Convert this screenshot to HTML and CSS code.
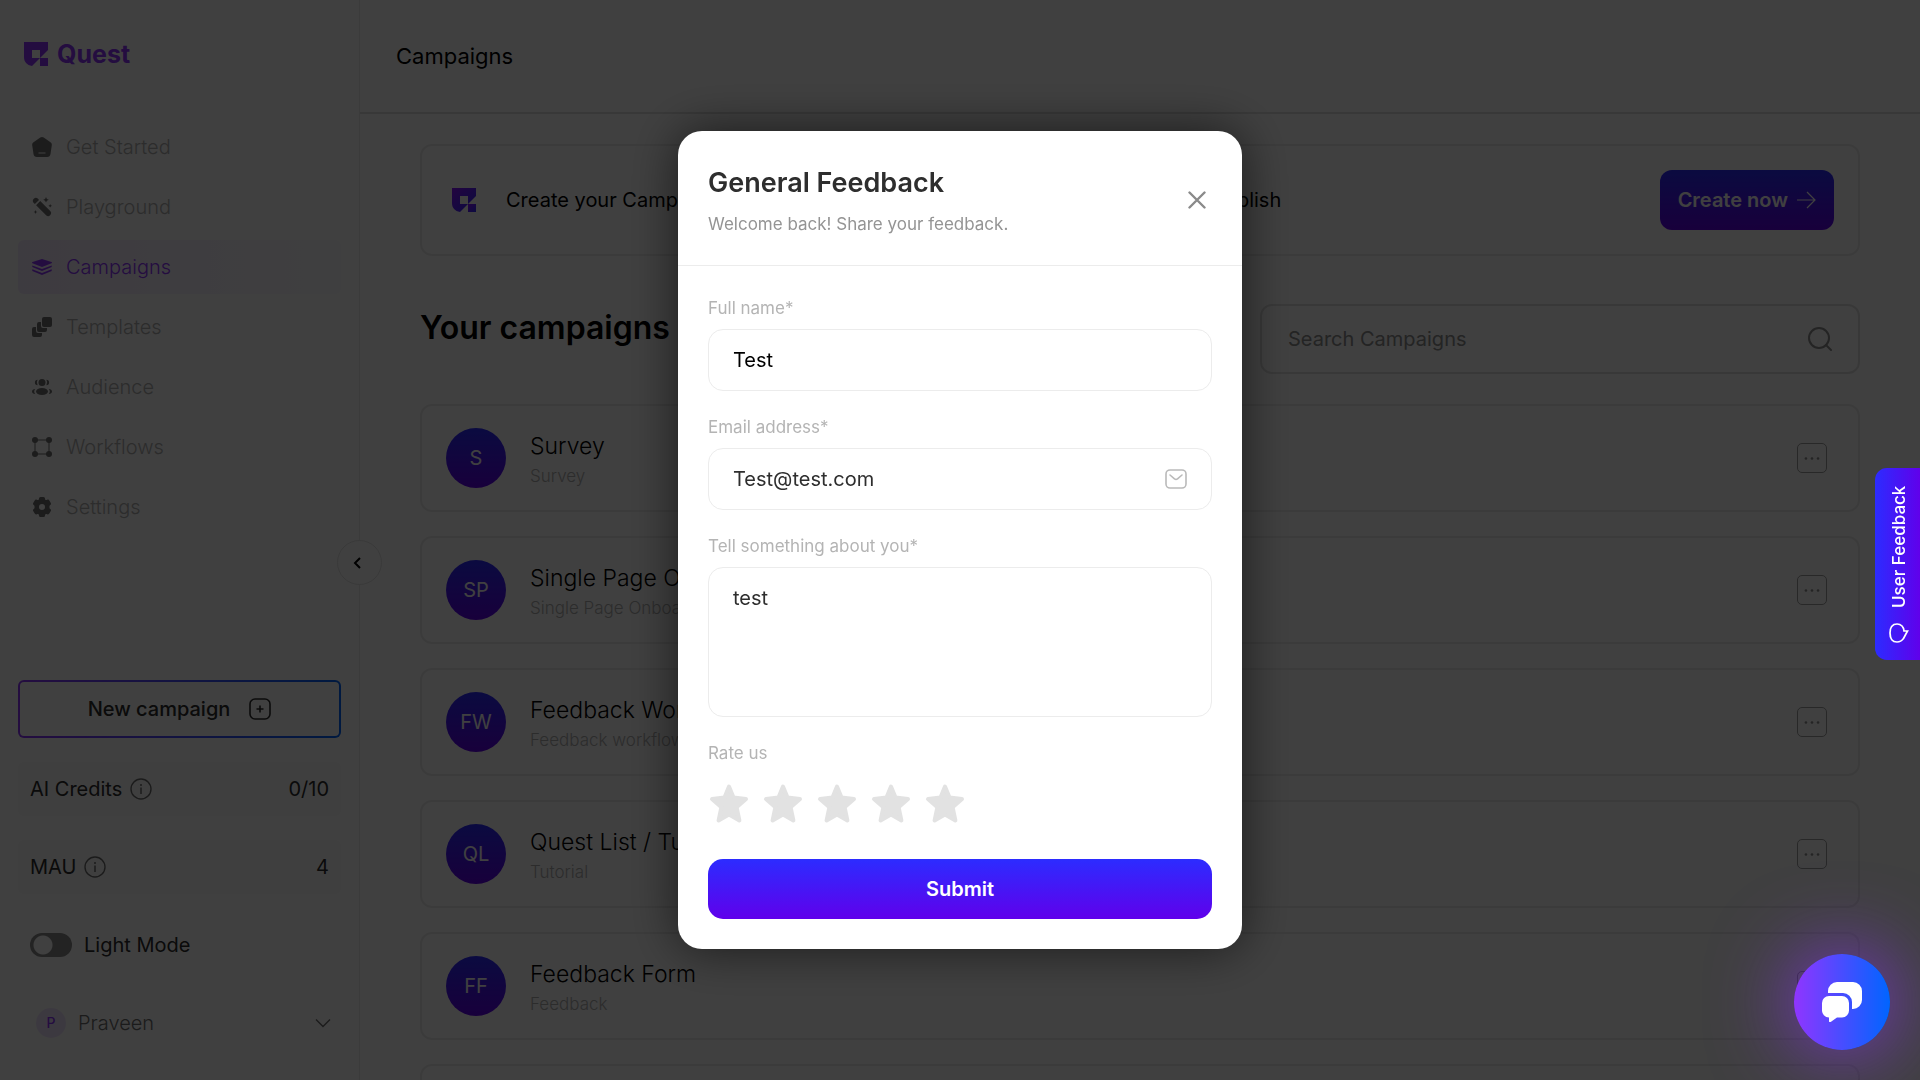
FILE: index.html
```html
<!DOCTYPE html>
<html lang="en">
<head>
<meta charset="utf-8">
<meta name="viewport" content="width=device-width, initial-scale=1">
<title>Quest – Campaigns</title>
<link rel="stylesheet" href="styles.css">
</head>
<body>
<svg class="defs" aria-hidden="true">
  <defs>
    <linearGradient id="brand" x1="0" y1="0" x2="1" y2="1">
      <stop offset="0" stop-color="#8b12ff"/>
      <stop offset="1" stop-color="#2c2cff"/>
    </linearGradient>
    <symbol id="logo-mark" viewBox="0 0 24 24">
      <path fill-rule="evenodd" d="M0 0H24V8L16 16L8 24C3 23 0 20 0 15ZM8 8V16H16V8Z"/>
      <path d="M16 16H24V24H16Z"/>
    </symbol>
    <symbol id="info" viewBox="0 0 22 22">
      <circle cx="11" cy="11" r="10" fill="none" stroke="currentColor" stroke-width="1.4"/>
      <path d="M11 9.5V16" stroke="currentColor" stroke-width="1.5"/>
      <circle cx="11" cy="7" r="1" fill="currentColor"/>
    </symbol>
    <symbol id="dots" viewBox="0 0 30 30">
      <circle cx="8.500" cy="15.500" r="1.400"/><circle cx="15" cy="15.500" r="1.400"/><circle cx="21.500" cy="15.500" r="1.400"/>
    </symbol>
    <symbol id="star" viewBox="0 0 42 42">
      <path d="M21 4.500L25.500 15.600L38 17L28.600 25.200L31.400 38.500L21 32.600L10.600 38.500L13.400 25.200L4 17L16.500 15.600Z" stroke="currentColor" stroke-width="4" stroke-linejoin="round"/>
    </symbol>
  </defs>
</svg>

<div class="app">
  <aside class="sidebar">
    <a class="logo" href="#">
      <svg class="logo-mark" aria-hidden="true"><use href="#logo-mark"/></svg>
      <span>Quest</span>
    </a>
    <nav class="nav">
      <a class="nav-item" href="#">
        <svg viewBox="0 0 20 20" aria-hidden="true"><path fill-rule="evenodd" d="M8.300.600a3 3 0 0 1 3.400 0l6.800 4.700A3 3 0 0 1 19.800 8.300L18.500 17a3.500 3.500 0 0 1-3.500 3H5a3.500 3.500 0 0 1-3.500-3L.200 8.300A3 3 0 0 1 1.500 5.300ZM6.500 15.500v1h7v-1Z"/></svg>
        <span>Get Started</span>
      </a>
      <a class="nav-item" href="#">
        <svg viewBox="0 0 20 20" aria-hidden="true"><path d="M1.800 1.800a3 3 0 0 1 4.200 0L7 2.900 2.900 7 1.800 6a3 3 0 0 1 0-4.200ZM8.200 4.100l10 10a2.900 2.900 0 0 1-4.100 4.100l-10-10ZM14 0l.9 1.900 1.900.9-1.900.9L14 5.600l-.9-1.900-1.900-.9 1.900-.9ZM18.200 7l.6 1.200 1.200.6-1.200.6-.6 1.200-.6-1.200-1.200-.6 1.200-.6ZM3.500 13l.6 1.400 1.400.6-1.400.6-.6 1.400-.6-1.400-1.400-.6 1.400-.6Z"/></svg>
        <span>Playground</span>
      </a>
      <a class="nav-item nav-item-active" href="#" aria-current="page">
        <svg viewBox="0 0 20 20" aria-hidden="true"><path d="M10 2l9.500 3c.7.300.7 1 0 1.300L10 10 .5 6.300c-.7-.3-.7-1 0-1.300Z"/><path d="M.300 8.400L10 12l9.700-3.600v1.700L10 14 .300 10.100ZM.300 12.200L10 15.900l9.700-3.700v1.700L10 18 .300 13.900Z"/></svg>
        <span>Campaigns</span>
      </a>
      <a class="nav-item" href="#">
        <svg viewBox="0 0 20 20" aria-hidden="true"><rect x="10" y="0" width="10" height="10" rx="2"/><path d="M9 5v4a2 2 0 0 0 2 2h4v2a2 2 0 0 1-2 2H7a2 2 0 0 1-2-2V7a2 2 0 0 1 2-2Z"/><path d="M4 10v4a2 2 0 0 0 2 2h4v2a2 2 0 0 1-2 2H2a2 2 0 0 1-2-2v-6a2 2 0 0 1 2-2Z"/></svg>
        <span>Templates</span>
      </a>
      <a class="nav-item" href="#">
        <svg viewBox="0 0 20 20" aria-hidden="true"><circle cx="10" cy="5.500" r="3.500"/><ellipse cx="10" cy="14.500" rx="6" ry="3.500"/><path d="M5.600 2.800a5 5 0 0 0 0 5.400 2.700 2.700 0 0 1 0-5.400ZM14.400 2.800a5 5 0 0 1 0 5.400 2.700 2.700 0 0 0 0-5.400ZM3.200 12a4 4 0 0 0 0 5C1.300 16.800 0 15.800 0 14.500S1.300 12.200 3.200 12ZM16.800 12a4 4 0 0 1 0 5c1.900-.2 3.200-1.200 3.200-2.500s-1.300-2.300-3.200-2.500Z"/></svg>
        <span>Audience</span>
      </a>
      <a class="nav-item" href="#">
        <svg viewBox="0 0 20 20" aria-hidden="true"><circle cx="3" cy="3" r="3"/><circle cx="17" cy="3" r="3"/><circle cx="3" cy="17" r="3"/><circle cx="17" cy="17" r="3"/><path d="M3 3H17V17H3Z" fill="none" stroke="currentColor" stroke-width="1"/></svg>
        <span>Workflows</span>
      </a>
      <a class="nav-item" href="#">
        <svg viewBox="0 0 20 20" aria-hidden="true"><path fill-rule="evenodd" d="M8.500 0h3a1.500 1.500 0 0 1 1.500 1.500c0 1.400 1 2 2.200 1.300.8-.4 1.700-.2 2.100.6l1.500 2.500c.4.800.2 1.600-.5 2.100-1.200.7-1.200 3.300 0 4 .7.500.9 1.300.5 2.100l-1.500 2.500c-.4.800-1.300 1-2.100.6-1.200-.7-2.200-.1-2.200 1.300a1.500 1.500 0 0 1-1.500 1.500h-3A1.500 1.500 0 0 1 7 18.500c0-1.400-1-2-2.200-1.300-.8.400-1.700.2-2.100-.6L1.200 14.100c-.4-.8-.2-1.600.5-2.100 1.200-.7 1.200-3.300 0-4-.7-.5-.9-1.300-.5-2.100l1.500-2.500c.4-.8 1.300-1 2.100-.6C6 3.500 7 2.900 7 1.500A1.500 1.500 0 0 1 8.500 0ZM10 7a3 3 0 1 0 0 6 3 3 0 0 0 0-6Z"/></svg>
        <span>Settings</span>
      </a>
    </nav>

    <div class="sidebar-foot">
      <button class="new-campaign" type="button">
        <span>New campaign</span>
        <svg viewBox="0 0 22 22" aria-hidden="true"><rect x="1" y="1" width="20" height="20" rx="5"/><path d="M11 7.500V14.500M7.500 11H14.500"/></svg>
      </button>
      <div class="stat"><span>AI Credits</span><svg aria-hidden="true"><use href="#info"/></svg><strong>0/10</strong></div>
      <div class="stat"><span>MAU</span><svg aria-hidden="true"><use href="#info"/></svg><strong>4</strong></div>
      <label class="mode"><input type="checkbox" role="switch"><span>Light Mode</span></label>
      <button class="user" type="button">
        <span class="user-avatar">P</span>
        <span class="user-name">Praveen</span>
        <svg viewBox="0 0 16 10" aria-hidden="true"><path d="M1 1.500L8 8.500L15 1.500"/></svg>
      </button>
    </div>
    <button class="collapse" type="button" aria-label="Collapse sidebar">
      <svg viewBox="0 0 8 12" aria-hidden="true"><path d="M7 1L2 6L7 11"/></svg>
    </button>
  </aside>

  <main class="main">
    <header class="topbar"><h1>Campaigns</h1></header>
    <div class="content">
      <section class="banner">
        <svg class="logo-mark" fill="url(#brand)" aria-hidden="true"><use href="#logo-mark"/></svg>
        <p>Create your Campaign in just a few minutes, pick from easy templates and publish</p>
        <button class="create" type="button"><span>Create now</span>
          <svg viewBox="0 0 20 18" aria-hidden="true"><path d="M1 9H19M11 1L19 9L11 17"/></svg>
        </button>
      </section>

      <div class="list-head">
        <h2>Your campaigns</h2>
        <label class="search">
          <input type="search" placeholder="Search Campaigns" aria-label="Search campaigns">
          <svg viewBox="0 0 24 24" aria-hidden="true"><circle cx="11" cy="11" r="10"/><path d="M18 18L23 23"/></svg>
        </label>
      </div>

      <ul class="rows">
        <li class="row"><span class="avatar">S</span><div class="row-text"><h3>Survey</h3><p>Survey</p></div><button class="more" type="button" aria-label="More actions"><svg aria-hidden="true"><use href="#dots"/></svg></button></li>
        <li class="row"><span class="avatar">SP</span><div class="row-text"><h3>Single Page Onboarding</h3><p>Single Page Onboarding</p></div><button class="more" type="button" aria-label="More actions"><svg aria-hidden="true"><use href="#dots"/></svg></button></li>
        <li class="row"><span class="avatar">FW</span><div class="row-text"><h3>Feedback Workflow</h3><p>Feedback workflow</p></div><button class="more" type="button" aria-label="More actions"><svg aria-hidden="true"><use href="#dots"/></svg></button></li>
        <li class="row"><span class="avatar">QL</span><div class="row-text"><h3>Quest List / Tutorial</h3><p>Tutorial</p></div><button class="more" type="button" aria-label="More actions"><svg aria-hidden="true"><use href="#dots"/></svg></button></li>
        <li class="row"><span class="avatar">FF</span><div class="row-text"><h3>Feedback Form</h3><p>Feedback</p></div><button class="more" type="button" aria-label="More actions"><svg aria-hidden="true"><use href="#dots"/></svg></button></li>
        <li class="row"></li>
      </ul>
    </div>
  </main>
</div>

<div class="overlay">
  <form class="modal" role="dialog" aria-labelledby="modal-title">
    <header class="modal-head">
      <div>
        <h2 id="modal-title">General Feedback</h2>
        <p>Welcome back! Share your feedback.</p>
      </div>
      <button class="close" type="button" aria-label="Close">
        <svg viewBox="0 0 18 18" aria-hidden="true"><path d="M1.500 1.500L16.500 16.500M16.500 1.500L1.500 16.500"/></svg>
      </button>
    </header>
    <div class="modal-body">
      <div class="field">
        <label for="name">Full name*</label>
        <input class="control control-name" id="name" type="text" value="Test">
      </div>
      <div class="field">
        <label for="email">Email address*</label>
        <div class="control control-icon">
          <input id="email" type="email" value="Test@test.com">
          <svg viewBox="0 0 22 20" aria-hidden="true"><rect x="1" y="1" width="20" height="18" rx="4"/><path d="M5 6L9.500 9.800Q11 11 12.500 9.800L17 6"/></svg>
        </div>
      </div>
      <div class="field">
        <label for="about">Tell something about you*</label>
        <textarea class="control control-area" id="about">test</textarea>
      </div>
      <div class="field">
        <span class="field-label" id="rate-label">Rate us</span>
        <div class="stars" role="group" aria-labelledby="rate-label">
          <button type="button" aria-label="1 star"><svg aria-hidden="true"><use href="#star"/></svg></button>
          <button type="button" aria-label="2 stars"><svg aria-hidden="true"><use href="#star"/></svg></button>
          <button type="button" aria-label="3 stars"><svg aria-hidden="true"><use href="#star"/></svg></button>
          <button type="button" aria-label="4 stars"><svg aria-hidden="true"><use href="#star"/></svg></button>
          <button type="button" aria-label="5 stars"><svg aria-hidden="true"><use href="#star"/></svg></button>
        </div>
      </div>
      <button class="submit" type="submit">Submit</button>
    </div>
  </form>
</div>

<button class="feedback-tab" type="button">
  <svg viewBox="0 0 20 20" aria-hidden="true"><path d="M5 12H1.500L5.500 4.500Q8 1 12 1C16.500 1 19 4.500 19 10C19 15.500 16.500 19 12 19C8 19 5 16 5 12Z"/></svg>
  <span>User Feedback</span>
</button>

<button class="chat" type="button" aria-label="Open chat">
  <svg viewBox="0 0 40 40" aria-hidden="true"><path d="M6 11V9a9 9 0 0 1 9-9H31a9 9 0 0 1 9 9V18a9 9 0 0 1-9 9H30V20a9 9 0 0 0-9-9Z"/><path d="M7 14H20a7 7 0 0 1 7 7V28a7 7 0 0 1-7 7.500H15L9 39.800Q7 41 7 39V35.500A7 7 0 0 1 0 28V21A7 7 0 0 1 7 14Z"/></svg>
</button>
</body>
</html>
```

FILE: styles.css
```css
:root {
  --line: #ececec;
  --muted: #b0b0b0;
  --purple: #9035ff;
  --fill: linear-gradient(180deg, #2c2cff 0%, #6000eb 100%);
}

* { box-sizing: border-box; margin: 0; padding: 0; }

body {
  height: 100vh;
  overflow: hidden;
  background: #fff;
  color: #000;
  font-family: Inter, "Open Sans", sans-serif;
  font-size: 20px;
  line-height: 28px;
}

a { color: inherit; text-decoration: none; }
button, input, textarea { font: inherit; color: inherit; border: 0; background: none; outline: 0; }
button { cursor: pointer; }
svg { display: block; flex: none; }
ul { list-style: none; }
.defs { position: absolute; width: 0; height: 0; }

.app { display: flex; height: 100vh; overflow: hidden; }

/* Sidebar */
.sidebar {
  position: relative;
  display: flex;
  flex: none;
  flex-direction: column;
  width: 360px;
  padding: 36px 18px 30px;
  border-right: 1px solid var(--line);
}
.logo {
  display: flex;
  align-items: center;
  gap: 9px;
  padding-left: 6px;
  color: var(--purple);
  font-size: 25px;
  font-weight: 700;
  line-height: 36px;
}
.logo-mark { width: 24px; height: 24px; }
.logo .logo-mark { fill: currentColor; }

.nav { display: flex; flex-direction: column; gap: 6px; margin-top: 48px; }
.nav-item {
  display: flex;
  align-items: center;
  gap: 14px;
  height: 54px;
  padding: 0 14px;
  border-radius: 6px;
  color: var(--muted);
  font-weight: 300;
}
.nav-item svg { width: 20px; height: 20px; color: #707070; fill: currentColor; }
.nav-item-active { background: linear-gradient(90deg, #f4eaff, #fbfbff); color: var(--purple); }
.nav-item-active svg { color: var(--purple); }

.sidebar-foot { display: flex; flex-direction: column; gap: 24px; margin-top: auto; color: #2c2c2c; }
.new-campaign {
  display: flex;
  align-items: center;
  justify-content: center;
  gap: 19px;
  height: 58px;
  border: 2px solid transparent;
  border-radius: 6px;
  background: linear-gradient(#fff, #fff) padding-box, linear-gradient(90deg, #9035ff, #0065ff) border-box;
  font-weight: 500;
}
.new-campaign svg { width: 22px; height: 22px; fill: none; stroke: currentColor; stroke-width: 1.6; }
.stat { display: flex; align-items: center; gap: 8px; height: 54px; padding: 0 12px; border-radius: 6px; background: #fbfbfb; }
.stat svg { width: 22px; height: 22px; color: #6e6e6e; }
.stat strong { margin-left: auto; font-weight: 400; }
.mode { display: flex; align-items: center; gap: 12px; height: 54px; padding: 0 12px; }
.mode input {
  appearance: none;
  width: 42px;
  height: 24px;
  border-radius: 12px;
  background: radial-gradient(circle at 13px 12px, #fff 9px, transparent 10px), #8a8a8a;
}
.user { display: flex; align-items: center; gap: 12px; height: 54px; padding: 0 10px 0 18px; color: #6e6e6e; font-weight: 300; }
.user-avatar {
  width: 30px;
  border-radius: 50%;
  background: #f0e4ff;
  color: var(--purple);
  font-size: 14px;
  font-weight: 500;
  line-height: 30px;
}
.user svg { width: 16px; height: 10px; margin-left: auto; fill: none; stroke: currentColor; stroke-width: 1.4; }
.collapse {
  position: absolute;
  top: 50%;
  right: -23px;
  display: grid;
  place-items: center;
  width: 45px;
  height: 45px;
  padding-right: 5px;
  border: 1px solid #e4e4e4;
  border-radius: 50%;
  background: #fff;
}
.collapse svg { width: 8px; height: 12px; fill: none; stroke: currentColor; stroke-width: 2; }

/* Main column */
.main { flex: 1; min-width: 0; }
.topbar { padding: 38px 36px; border-bottom: 2px solid #e0e0e0; }
.topbar h1 { font-size: 22px; font-weight: 400; line-height: 36px; }
.content { padding: 30px 60px; }
.banner {
  display: flex;
  align-items: center;
  height: 112px;
  padding: 0 24px 0 30px;
  border: 2px solid var(--line);
  border-radius: 12px;
}
.banner p { margin-left: 30px; }
.create {
  display: flex;
  align-items: center;
  gap: 8px;
  height: 60px;
  margin-left: auto;
  padding: 0 18px;
  border-radius: 12px;
  background: var(--fill);
  color: #fff;
  font-weight: 600;
}
.create svg { width: 20px; height: 18px; fill: none; stroke: currentColor; stroke-width: 1.2; }

.list-head { display: flex; justify-content: space-between; margin: 48px 0 30px; }
.list-head h2 { font-size: 32px; font-weight: 600; line-height: 48px; }
.search {
  display: flex;
  align-items: center;
  width: 600px;
  height: 70px;
  padding: 0 26px;
  border: 2px solid #e0e0e0;
  border-radius: 12px;
}
.search input { flex: 1; min-width: 0; }
.search input::placeholder { color: #8e8e8e; opacity: 1; }
.search svg { width: 24px; height: 24px; fill: none; stroke: #8e8e8e; stroke-width: 2; stroke-linecap: round; }

.rows { display: flex; flex-direction: column; gap: 24px; }
.row {
  display: flex;
  align-items: center;
  gap: 24px;
  height: 108px;
  padding: 0 31px 0 24px;
  border: 2px solid var(--line);
  border-radius: 12px;
}
.avatar {
  width: 60px;
  border-radius: 50%;
  background: var(--fill);
  color: #fff;
  line-height: 60px;
  text-align: center;
}
.row-text { padding-top: 4px; }
.row h3 { font-size: 23px; font-weight: 300; line-height: 32px; }
.row p { color: var(--muted); font-size: 17px; font-weight: 300; }
.more { width: 30px; height: 30px; margin-left: auto; border: 1px solid #a0a0a0; border-radius: 5px; color: #909090; }
.more svg { width: 28px; height: 28px; fill: currentColor; }

/* Feedback dialog */
.overlay {
  position: fixed;
  inset: 0;
  display: grid;
  place-items: center;
  background: rgba(0, 0, 0, .75);
}
.modal { width: 564px; border-radius: 24px; background: #fff; box-shadow: 0 0 50px rgba(0, 0, 0, .6); }
.modal-head {
  display: flex;
  align-items: center;
  justify-content: space-between;
  padding: 30px 30px 27px;
  border-bottom: 1px solid var(--line);
}
.modal-head h2 { margin-bottom: 5px; color: #2e2e2e; font-size: 27px; font-weight: 600; line-height: 44px; }
.modal-head p { color: #949494; font-size: 17px; }
.close { display: grid; place-items: center; width: 30px; height: 30px; }
.close svg { width: 18px; height: 18px; fill: none; stroke: #8a8a8a; stroke-width: 2.4; stroke-linecap: round; }

.modal-body { display: flex; flex-direction: column; gap: 24px; padding: 30px; }
.field { display: flex; flex-direction: column; gap: 9px; }
.field label, .field-label { color: #b4b4b4; font-size: 17px; line-height: 24px; }
.control {
  width: 100%;
  height: 62px;
  padding: 0 24px;
  border: 1px solid var(--line);
  border-radius: 15px;
  color: #2e2e2e;
}
.control-name { color: #000; }
.control-icon { display: flex; align-items: center; }
.control-icon input { flex: 1; min-width: 0; }
.control-icon svg { width: 22px; height: 20px; fill: none; stroke: #bababa; stroke-width: 1.6; stroke-linecap: round; }
.control-area { display: block; height: 150px; padding-top: 16px; resize: none; }
.stars { display: flex; gap: 12px; padding: 8px 0 11px; }
.stars button { width: 42px; height: 42px; color: #e2e2e2; }
.stars svg { width: 42px; height: 42px; fill: currentColor; }
.submit { height: 60px; border-radius: 15px; background: var(--fill); color: #fff; font-weight: 600; }

/* Floating widgets */
.feedback-tab {
  position: fixed;
  top: 468px;
  right: 0;
  display: flex;
  align-items: center;
  justify-content: center;
  gap: 15px;
  width: 45px;
  height: 192px;
  padding-right: 3px;
  border-radius: 0 12px 12px 0;
  background: linear-gradient(270deg, #2c2cff, #6000eb);
  color: #fff;
  font-size: 17px;
  font-weight: 500;
  white-space: nowrap;
  writing-mode: vertical-rl;
  transform: rotate(180deg);
}
.feedback-tab svg { width: 20px; height: 20px; fill: none; stroke: currentColor; stroke-width: 1.7; }

.chat {
  position: fixed;
  right: 30px;
  bottom: 30px;
  display: grid;
  place-items: center;
  width: 96px;
  height: 96px;
  border-radius: 50%;
  background: linear-gradient(90deg, #9035ff, #0065ff);
  box-shadow: 0 0 80px 4px rgba(144, 53, 255, .7);
}
.chat svg { width: 40px; height: 40px; fill: #fff; }
```
